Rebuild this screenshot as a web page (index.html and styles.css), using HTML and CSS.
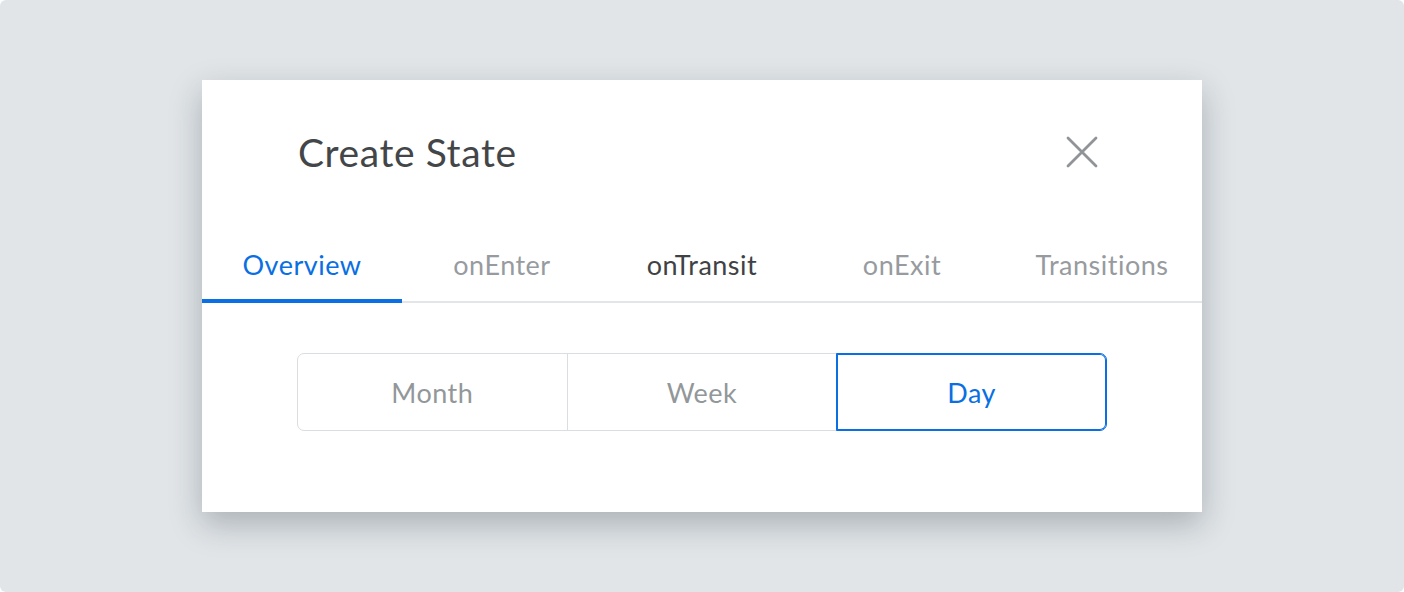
FILE: index.html
```html
<!DOCTYPE html>
<html>
<head>
<meta charset="utf-8">
<link rel="stylesheet" href="styles.css">
</head>
<body>
<div class="stage">
  <div class="modal">
    <div class="modal-header">
      <h1 class="title">Create State</h1>
      <button class="close" aria-label="Close">
        <svg width="34" height="34" viewBox="0 0 34 34"><path d="M3 3 L31 31 M31 3 L3 31" stroke="#909498" stroke-width="2.8" stroke-linecap="round" fill="none"/></svg>
      </button>
    </div>
    <div class="tabs">
      <div class="tab active">Overview</div>
      <div class="tab">onEnter</div>
      <div class="tab dark">onTransit</div>
      <div class="tab">onExit</div>
      <div class="tab">Transitions</div>
    </div>
    <div class="modal-body">
      <div class="segmented">
        <div class="seg">Month</div>
        <div class="seg">Week</div>
        <div class="seg active">Day</div>
      </div>
    </div>
  </div>
</div>
</body>
</html>
```
FILE: styles.css
```css
html, body {
  margin: 0;
  padding: 0;
  background: #ffffff;
}
body {
  font-family: Lato, "Open Sans", sans-serif;
}
.stage {
  width: 1404px;
  height: 592px;
  background: #e1e5e8;
  border-radius: 6px;
  display: flex;
  align-items: center;
  justify-content: center;
}
.modal {
  width: 1000px;
  height: 432px;
  background: #ffffff;
  box-shadow: 0 12px 30px rgba(30, 40, 50, 0.28);
  box-sizing: border-box;
}
.modal-header {
  display: flex;
  align-items: center;
  justify-content: space-between;
  padding: 48px 103px 0 96px;
  height: 96px;
  box-sizing: border-box;
}
.title {
  margin: 0;
  font-size: 39px;
  font-weight: 400;
  line-height: 48px;
  color: #434649;
  letter-spacing: 0.6px;
}
.close {
  background: none;
  border: 0;
  padding: 0;
  width: 34px;
  height: 34px;
  display: flex;
}
.tabs {
  display: flex;
  margin-top: 74px;
  border-bottom: 2px solid #e3e6e9;
}
.tab {
  flex: 1;
  text-align: center;
  font-size: 27px;
  letter-spacing: 0.5px;
  line-height: 30px;
  padding-bottom: 21px;
  color: #979b9f;
  position: relative;
}
.tab.dark {
  color: #3f4245;
}
.tab.active {
  color: #0a6fe2;
}
.tab.active::after {
  content: "";
  position: absolute;
  left: 0;
  right: 0;
  bottom: -2px;
  height: 4px;
  background: #0a6fe2;
}
.modal-body {
  padding: 50px 95px 0 95px;
}
.segmented {
  display: flex;
  height: 78px;
}
.seg {
  flex: 1;
  display: flex;
  align-items: center;
  justify-content: center;
  font-size: 27px;
  letter-spacing: 0.5px;
  color: #92979a;
  border: 1px solid #dadee2;
  margin-left: -1px;
  position: relative;
}
.seg:first-child {
  margin-left: 0;
  border-radius: 7px 0 0 7px;
}
.seg:last-child {
  border-radius: 0 7px 7px 0;
}
.seg.active {
  border-color: #0a6fe2;
  box-shadow: inset 0 0 0 1px #0a6fe2;
  color: #0a6fe2;
  z-index: 1;
}
```
